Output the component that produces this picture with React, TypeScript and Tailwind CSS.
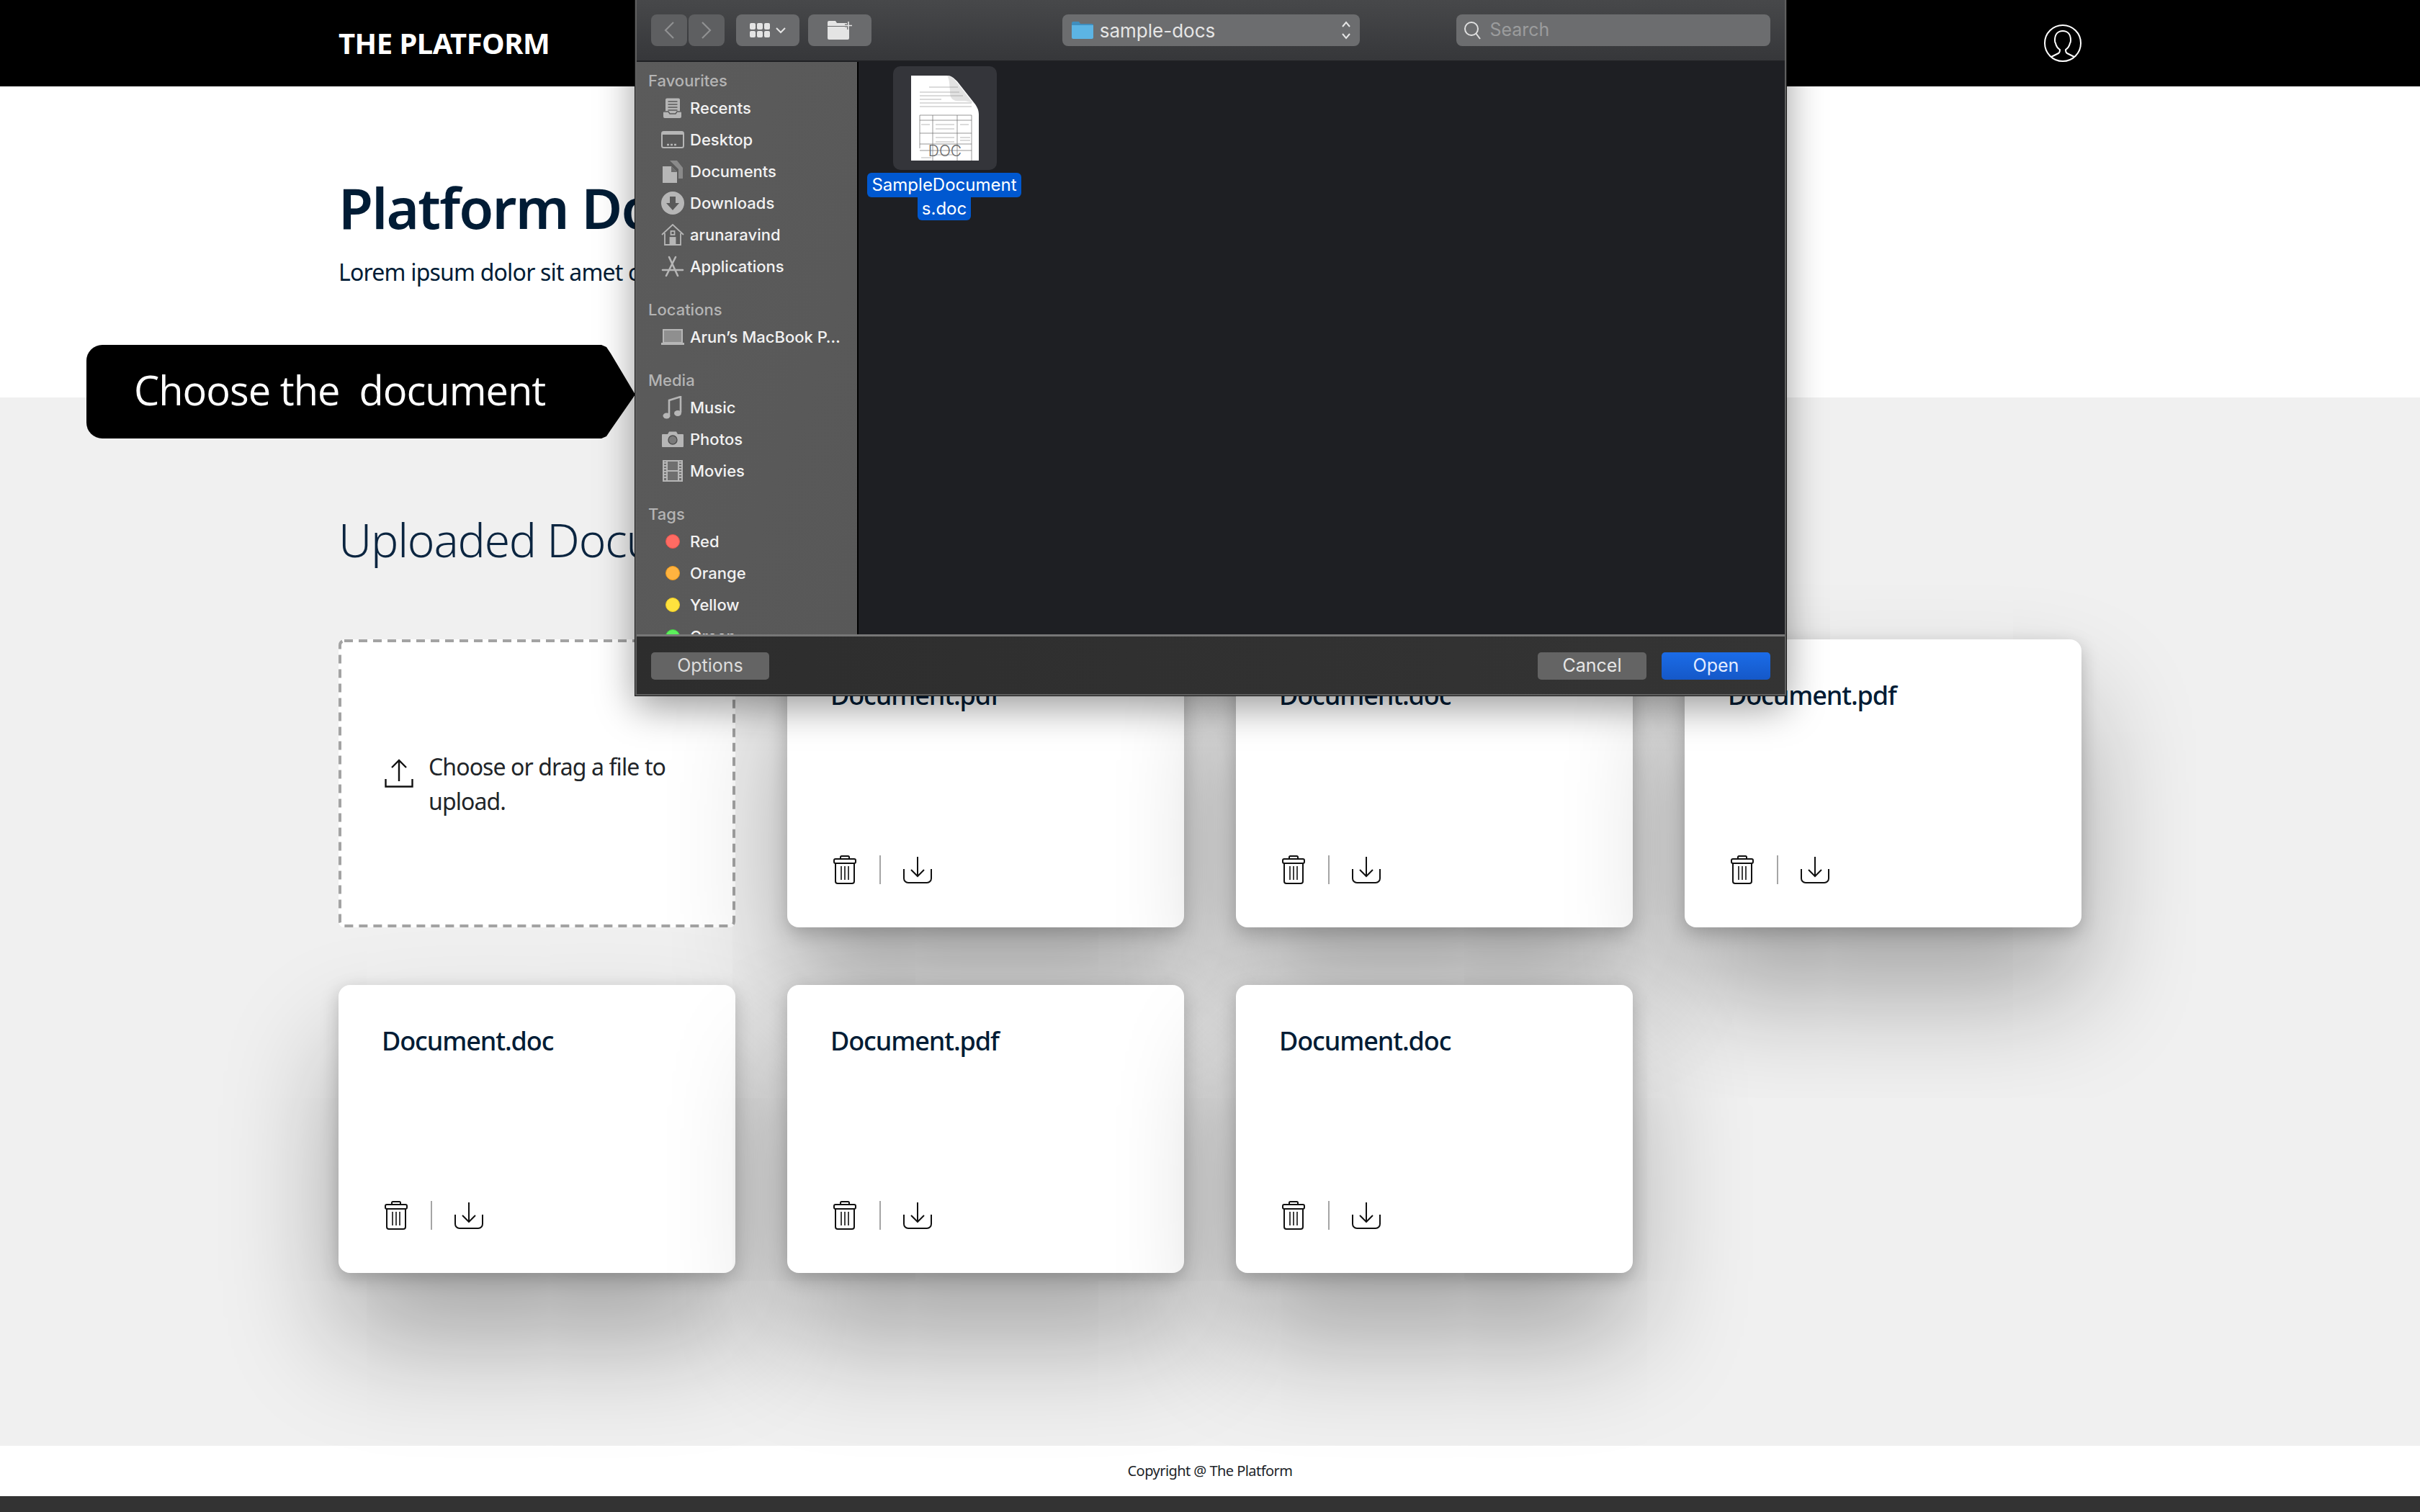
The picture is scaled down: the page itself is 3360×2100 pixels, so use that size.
const plex = "font-['Noto_Sans',sans-serif]";
const mac = "font-['Inter',sans-serif]";

const iconColor = "#b6b6b6";

const Recents = () => (
  <svg width="28" height="28" viewBox="0 0 28 28" fill="none">
    <path d="M4 2.500a2 2 0 0 1 2-2h16a2 2 0 0 1 2 2V18l2 1v7a2 2 0 0 1-2 2H3a2 2 0 0 1-2-2v-7l3-1z" fill={iconColor} />
    <path d="M7.500 5h13M7.500 9h13M7.500 13h13M7.500 17h13" stroke="#5a5a5a" strokeWidth="1.600" />
    <path d="M1 19h7l2 3h8l2-3h7" stroke="#5a5a5a" strokeWidth="1.400" />
  </svg>
);

const Desktop = () => (
  <svg width="32" height="24" viewBox="0 0 32 24" fill="none">
    <rect x="1" y="1" width="30" height="22" rx="2.500" fill="#595959" stroke={iconColor} strokeWidth="2" />
    <rect x="1" y="1" width="30" height="4" fill={iconColor} />
    <path d="M8 19h3M13 19h3M18 19h3" stroke={iconColor} strokeWidth="2.400" />
  </svg>
);

const Documents = () => (
  <svg width="28" height="31" viewBox="0 0 28 31">
    <path d="M10 0h10l8 10v15h-6V12l-9-9z" fill="#8a8a8a" />
    <path d="M0 8h12l8 8v15H0z" fill={iconColor} />
    <path d="M12 8l8 8h-8z" fill="#6c6c6c" />
  </svg>
);

const Downloads = () => (
  <svg width="32" height="32" viewBox="0 0 32 32">
    <circle cx="16" cy="16" r="16" fill={iconColor} />
    <path d="M12 7h8v9h5l-9 10-9-10h5z" fill="#595959" />
  </svg>
);

const Home = () => (
  <svg width="32" height="30" viewBox="0 0 32 30" fill="none" stroke={iconColor} strokeWidth="1.800">
    <path d="M1 15 16 1l15 14" />
    <path d="M5 13v16h22V13" />
    <rect x="13.500" y="10" width="5" height="5" />
    <rect x="12.500" y="19" width="7" height="10" fill={iconColor} />
  </svg>
);

const Applications = () => (
  <svg width="32" height="30" viewBox="0 0 32 30" fill="none" stroke={iconColor} strokeWidth="2.600" strokeLinecap="round">
    <path d="M11 2l12 26M20 2 7 28M2 20h28" />
  </svg>
);

const Laptop = () => (
  <svg width="32" height="22" viewBox="0 0 32 22">
    <rect x="3" y="1" width="26" height="18" fill="#8f8f8f" stroke={iconColor} strokeWidth="2" />
    <rect x="0" y="19" width="32" height="3" fill={iconColor} />
  </svg>
);

const Music = () => (
  <svg width="28" height="33" viewBox="0 0 28 33" fill="none">
    <path d="M9 26V6l16-5v22" stroke={iconColor} strokeWidth="2.600" />
    <ellipse cx="5.500" cy="27.500" rx="5" ry="4" fill={iconColor} />
    <ellipse cx="21" cy="24" rx="5" ry="4" fill={iconColor} />
  </svg>
);

const Photos = () => (
  <svg width="30" height="22" viewBox="0 0 30 22">
    <path d="M1 4h7l2-3.500h10L22 4h7a1 1 0 0 1 1 1v16a1 1 0 0 1-1 1H1a1 1 0 0 1-1-1V5a1 1 0 0 1 1-1z" fill={iconColor} />
    <circle cx="15" cy="12" r="6" fill="#7a7a7a" stroke="#4e4e4e" strokeWidth="1.400" />
  </svg>
);

const Movies = () => (
  <svg width="28" height="30" viewBox="0 0 28 30" fill="none">
    <rect x="1" y="1" width="26" height="28" fill="#6f6f6f" stroke={iconColor} strokeWidth="2" />
    <path d="M6 1v28M22 1v28M6 15h16" stroke={iconColor} strokeWidth="2" />
    <path d="M3.500 3v24M24.500 3v24" stroke={iconColor} strokeWidth="3" strokeDasharray="2 2" />
  </svg>
);

const Dot = ({ fill, ring }: { fill: string; ring: string }) => (
  <span className="h-5 w-5 rounded-full border" style={{ backgroundColor: fill, borderColor: ring }} />
);

const sidebar = [
  {
    title: "Favourites",
    items: [
      { label: "Recents", icon: <Recents /> },
      { label: "Desktop", icon: <Desktop /> },
      { label: "Documents", icon: <Documents /> },
      { label: "Downloads", icon: <Downloads /> },
      { label: "arunaravind", icon: <Home /> },
      { label: "Applications", icon: <Applications /> },
    ],
  },
  { title: "Locations", items: [{ label: "Arun’s MacBook P…", icon: <Laptop /> }] },
  {
    title: "Media",
    items: [
      { label: "Music", icon: <Music /> },
      { label: "Photos", icon: <Photos /> },
      { label: "Movies", icon: <Movies /> },
    ],
  },
  {
    title: "Tags",
    items: [
      { label: "Red", icon: <Dot fill="#ff6b63" ring="#e5544d" /> },
      { label: "Orange", icon: <Dot fill="#ffb340" ring="#f09a1a" /> },
      { label: "Yellow", icon: <Dot fill="#ffe23e" ring="#eecb20" /> },
      { label: "Green", icon: <Dot fill="#5cf05c" ring="#3fd03f" /> },
    ],
  },
];

const BlueFolder = () => (
  <svg width="30" height="24" viewBox="0 0 30 24">
    <path d="M0 2a2 2 0 0 1 2-2h8l2 3h16a2 2 0 0 1 2 2v4H0z" fill="#3f8dbd" />
    <path d="M0 5h30v17a2 2 0 0 1-2 2H2a2 2 0 0 1-2-2z" fill="#5cb4e4" />
  </svg>
);

const DocThumb = () => (
  <svg width="94" height="118" viewBox="0 0 94 118">
    <path d="M0 0h50c6 0 9 3 14 8l22 28c5 6 8 11 8 18v64H0z" fill="#fff" />
    <path d="M50 0c8 1 10 6 14 10l22 28c-10-4-18-2-24-3-8-2-8-8-8-14-1-8 0-14-4-21z" fill="#e2e2e2" />
    <g fill="none" stroke="#6a6a6a" strokeWidth="0.700">
      <path d="M25 16h40M12 23h55M12 28h60M12 33h30M12 38h72M12 43h72" stroke="#999" />
      <path d="M12 55h72v64M12 55v46M12 62h72M12 80h72M12 95h72M30 55v64M64 55v64M12 104h72" />
      <path d="M14 68h12M34 68h26M34 74h26M34 86h26M68 68h12M68 86h14M68 90h14M34 92h26M14 114h14M34 110h26" stroke="#999" />
    </g>
    <text x="47" y="112" textAnchor="middle" fontSize="21" fill="#6c6c6c" fontFamily="Inter, sans-serif" fontWeight="300">
      DOC
    </text>
  </svg>
);

const ToolButton = ({ className, children }: { className: string; children: React.ReactNode }) => (
  <div className={`flex h-[44px] items-center rounded-[8px] ${className}`}>{children}</div>
);

const Dialog = () => (
  <div className={`${mac} absolute left-[882px] top-0 z-20 flex h-[966px] w-[1598px] flex-col border-2 border-t-0 border-[#5f5f5f] shadow-[0_0_0_1px_#1a1a1a,0_16px_50px_rgba(0,0,0,0.4)]`}>
    {/* Toolbar */}
    <div className="flex h-[84px] shrink-0 items-center bg-gradient-to-b from-[#47484a] to-[#36373a] pl-[20px] pr-[20px]">
      <ToolButton className="w-[50px] justify-center bg-[#5e5f61]">
        <svg width="14" height="24" viewBox="0 0 14 24" fill="none" stroke="#909192" strokeWidth="2.200"><path d="M13 1 2 12l11 11" /></svg>
      </ToolButton>
      <ToolButton className="ml-[2px] w-[50px] justify-center bg-[#5e5f61]">
        <svg width="14" height="24" viewBox="0 0 14 24" fill="none" stroke="#909192" strokeWidth="2.200"><path d="m1 1 11 11L1 23" /></svg>
      </ToolButton>
      <ToolButton className="ml-[16px] w-[88px] justify-center gap-[8px] bg-[#6a6b6d]">
        <span className="grid grid-cols-3 gap-[2px]">
          {[0, 1, 2, 3, 4, 5].map((i) => (
            <span key={i} className="h-[9px] w-[8px] rounded-[2px] bg-[#e4e4e4]" />
          ))}
        </span>
        <svg width="14" height="9" viewBox="0 0 14 9" fill="none" stroke="#e4e4e4" strokeWidth="2"><path d="m1 1 6 6 6-6" /></svg>
      </ToolButton>
      <ToolButton className="ml-[12px] w-[88px] justify-center bg-[#6a6b6d]">
        <svg width="36" height="26" viewBox="0 0 36 26">
          <path d="M1 2a2 2 0 0 1 2-2h9l2 3h14a2 2 0 0 1 2 2v2H1z" fill="#e4e4e4" />
          <path d="M1 8h30v16a2 2 0 0 1-2 2H3a2 2 0 0 1-2-2z" fill="#e4e4e4" />
          <path d="M30 1v11M25 6.500h10" stroke="#6a6b6d" strokeWidth="4" />
          <path d="M30 1v11M25 6.500h10" stroke="#e4e4e4" strokeWidth="1.600" />
        </svg>
      </ToolButton>
      <ToolButton className="ml-[265px] w-[414px] justify-between bg-[#6c6d6f] pl-[13px] pr-[12px]">
        <span className="flex items-center gap-[9px] text-[26px] text-[#e6e6e6]">
          <BlueFolder />
          sample-docs
        </span>
        <svg width="14" height="26" viewBox="0 0 14 26" fill="none" stroke="#e6e6e6" strokeWidth="2"><path d="m2 8 5-6 5 6M2 18l5 6 5-6" /></svg>
      </ToolButton>
      <ToolButton className="ml-[134px] w-[436px] justify-start gap-[10px] bg-[#6c6d6f] pl-[10px]">
        <svg width="26" height="26" viewBox="0 0 26 26" fill="none" stroke="#e0e0e0" strokeWidth="2"><circle cx="11" cy="11" r="9" /><path d="m17 17 6 8" /></svg>
        <span className="text-[25px] text-[#9b9c9d]">Search</span>
      </ToolButton>
    </div>

    {/* Body */}
    <div className="flex min-h-0 flex-1 border-t-2 border-[#1f2023]">
      <div className="h-full w-[308px] shrink-0 overflow-hidden border-r-2 border-black bg-gradient-to-br from-[#5b5b5b] to-[#585858] pl-[16px] pt-[10px]">
        <div className="flex flex-col gap-[22px]">
          {sidebar.map((section) => (
            <div key={section.title}>
              <div className="flex h-[32px] items-center text-[22px] font-medium text-[#b4b4b4]">{section.title}</div>
              {section.items.map((item) => (
                <div key={item.label} className="flex h-[44px] items-center gap-[6px] pl-[16px] text-[22px] font-medium whitespace-nowrap text-[#f2f2f2]">
                  <span className="flex w-[36px] justify-center">{item.icon}</span>
                  {item.label}
                </div>
              ))}
            </div>
          ))}
        </div>
      </div>
      <div className="flex-1 bg-[#1e1f23] pl-[12px] pt-[6px]">
        <div className="flex w-[214px] flex-col items-center">
          <div className="ml-[2px] flex h-[144px] w-[144px] items-center justify-center rounded-[10px] bg-[#34353a]">
            <DocThumb />
          </div>
          <div className="mt-[4px] flex h-[34px] w-[214px] items-center justify-center rounded-[6px] bg-[#0058d0] text-[24px] text-white">SampleDocument</div>
          <div className="flex h-[32px] w-[74px] items-center justify-center rounded-b-[6px] bg-[#0058d0] text-[24px] text-white">s.doc</div>
        </div>
      </div>
    </div>

    {/* Bottom bar */}
    <div className="flex h-[83px] shrink-0 items-center justify-between border-t-[3px] border-[#777] bg-gradient-to-r from-[#2d2d2d] to-[#343434] px-[20px] pt-[2px]">
      <div className="flex h-[38px] w-[164px] items-center justify-center rounded-[5px] bg-[#646464] text-[25px] text-[#dcdcdc]">Options</div>
      <div className="flex gap-[21px]">
        <div className="flex h-[38px] w-[151px] items-center justify-center rounded-[5px] bg-[#646464] text-[25px] text-[#e6e6e6]">Cancel</div>
        <div className="flex h-[38px] w-[151px] items-center justify-center rounded-[5px] bg-gradient-to-b from-[#1b6ce8] to-[#1558c8] text-[25px] text-[#e4ecff]">Open</div>
      </div>
    </div>
  </div>
);

const Callout = () => (
  <div className="absolute left-[120px] top-[479px] z-10 flex h-[130px] w-[762px] items-center rounded-l-[22px] bg-black pb-[6px] pl-[66px] font-['Open_Sans',sans-serif] text-[56px] tracking-[-1px] whitespace-pre text-white [clip-path:polygon(0_0,715px_0,722px_3px,728px_12px,762px_69px,728px_118px,722px_127px,715px_130px,0_130px)]">
    Choose the  document
  </div>
);

const Trash = () => (
  <svg width="32" height="40" viewBox="0 0 32 40" fill="none" stroke="#111" strokeWidth="2">
    <path d="M10 5V2.500A1.500 1.500 0 0 1 11.500 1h9A1.500 1.500 0 0 1 22 2.500V5" />
    <rect x="1" y="5" width="30" height="6" rx="2" />
    <path d="M3 11v25a3 3 0 0 0 3 3h20a3 3 0 0 0 3-3V11" />
    <path d="M11 15v19M16 15v19M21 15v19" strokeWidth="1.600" />
  </svg>
);

const Download = () => (
  <svg width="40" height="38" viewBox="0 0 40 38" fill="none" stroke="#111" strokeWidth="2">
    <path d="M1 18v13a6 6 0 0 0 6 6h26a6 6 0 0 0 6-6V18" />
    <path d="M20 1v27M11 19l9 9 9-9" />
  </svg>
);

const Upload = () => (
  <svg width="40" height="40" viewBox="0 0 40 40" fill="none" stroke="#111" strokeWidth="2.400">
    <path d="M20 31V2M10 12 20 2l10 10" />
    <path d="M1.500 28v10.500h37V28" />
  </svg>
);

const Card = ({ name }: { name: string }) => (
  <div className="relative flex h-[400px] flex-col justify-between rounded-[16px] bg-white px-[60px] pb-[60px] pt-[54px] shadow-[0_8px_26px_rgba(0,0,0,0.22),0_90px_160px_rgba(0,0,0,0.32)]">
    <h3 className="text-[36px] leading-[48px] font-medium tracking-[-1.1px] text-[#011c35]">{name}</h3>
    <div className="ml-[4px] flex items-center">
      <Trash />
      <span className="ml-[32px] h-[40px] w-[2px] bg-[#a5a5a5]" />
      <span className="ml-[31px] flex">
        <Download />
      </span>
    </div>
  </div>
);

export default function App() {
  return (
    <div className={`${plex} relative flex h-[2100px] w-[3360px] flex-col overflow-hidden bg-white`}>
      <header className="flex h-[120px] shrink-0 items-center justify-between bg-black pl-[470px] pr-[470px]">
        <span className="text-[40px] font-bold tracking-[-0.5px] text-white">THE PLATFORM</span>
        <svg width="52" height="52" viewBox="0 0 52 52" fill="none" stroke="#fff" strokeWidth="2">
          <circle cx="26" cy="26" r="25" />
          <path d="M10 45l10-5c2-1 2-3 2-5-3-2-5-4-6-9-1-1-1-2-1-4 0-8 4-13 11-13s11 5 11 13c0 2 0 3-1 4-1 5-3 7-6 9 0 2 0 4 2 5l10 5" />
        </svg>
      </header>

      <section className="h-[432px] shrink-0 pl-[470px] pt-[120px]">
        <h1 className="text-[78px] leading-[96px] font-semibold tracking-[-1.8px] text-[#011c35]">Platform Documents</h1>
        <p className="mt-[18px] text-[32px] leading-[48px] tracking-[-0.8px] text-[#011c35]">Lorem ipsum dolor sit amet consectetur</p>
      </section>

      <main className="flex-1 bg-[#f0f0f0] px-[470px] pt-[160px]">
        <h2 className="text-[64px] leading-[76px] font-light tracking-[-1.2px] text-[#0b2540]">Uploaded Documents</h2>
        <div className="mt-[100px] grid grid-cols-4 gap-x-[72px] gap-y-[80px]">
          <div className="relative flex h-[400px] items-start gap-[21px] rounded-[8px] bg-white pl-[64px] pr-[40px] pt-[153px]">
            <svg className="absolute inset-0" width="100%" height="100%" fill="none">
              <rect x="2" y="2" width="547" height="396" rx="6" stroke="#a3a3a3" strokeWidth="4" strokeDasharray="12 8" />
            </svg>
            <span className="mt-[13px] shrink-0"><Upload /></span>
            <p className="text-[32px] leading-[48px] tracking-[-0.9px] text-[#212529]">Choose or drag a file to upload.</p>
          </div>
          <Card name="Document.pdf" />
          <Card name="Document.doc" />
          <Card name="Document.pdf" />
          <Card name="Document.doc" />
          <Card name="Document.pdf" />
          <Card name="Document.doc" />
        </div>
      </main>

      <footer className="flex h-[70px] shrink-0 items-center justify-center bg-white text-[20px] tracking-[-0.55px] text-[#212529]">Copyright @ The Platform</footer>
      <div className="h-[22px] shrink-0 bg-[#333]" />

      <Callout />
      <Dialog />
    </div>
  );
}
